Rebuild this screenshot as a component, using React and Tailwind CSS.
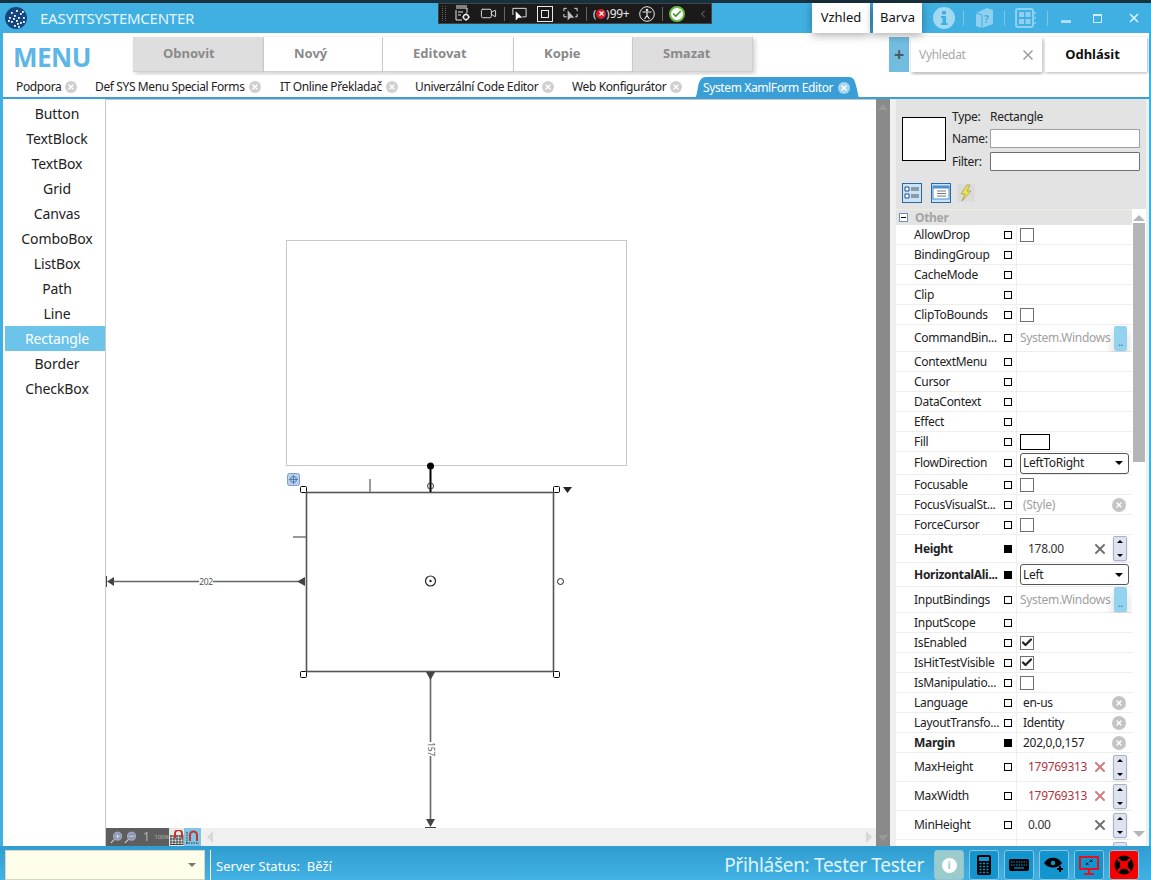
import React from 'react';
import { Video, Check, X, ChevronLeft } from 'lucide-react';

const tools = ['Button', 'TextBlock', 'TextBox', 'Grid', 'Canvas', 'ComboBox', 'ListBox', 'Path', 'Line', 'Rectangle', 'Border', 'CheckBox'];

const actions = [
  { label: 'Obnovit', width: 'w-[131px]', gray: true },
  { label: 'Nový', width: 'w-[119px]' },
  { label: 'Editovat', width: 'w-[131px]' },
  { label: 'Kopie', width: 'w-[119px]' },
  { label: 'Smazat', width: 'w-[120px]', gray: true },
];

const tabs = [
  { label: 'Podpora', width: 'w-[89px]' },
  { label: 'Def SYS Menu Special Forms', width: 'w-[185px]' },
  { label: 'IT Online Překladač', width: 'w-[135px]' },
  { label: 'Univerzální Code Editor', width: 'w-[157px]' },
  { label: 'Web Konfigurátor', width: 'w-[122px]' },
];

// h = row height, kind = editor in the value column
const rows = [
  { name: 'AllowDrop', h: 'h-[20px]', kind: 'check' },
  { name: 'BindingGroup', h: 'h-[20px]' },
  { name: 'CacheMode', h: 'h-[20px]' },
  { name: 'Clip', h: 'h-[20px]' },
  { name: 'ClipToBounds', h: 'h-[20px]', kind: 'check' },
  { name: 'CommandBin...', h: 'h-[27px]', kind: 'dots' },
  { name: 'ContextMenu', h: 'h-[20px]' },
  { name: 'Cursor', h: 'h-[20px]' },
  { name: 'DataContext', h: 'h-[20px]' },
  { name: 'Effect', h: 'h-[20px]' },
  { name: 'Fill', h: 'h-[20px]', kind: 'fill' },
  { name: 'FlowDirection', h: 'h-[23px]', kind: 'select', value: 'LeftToRight' },
  { name: 'Focusable', h: 'h-[20px]', kind: 'check' },
  { name: 'FocusVisualSt...', h: 'h-[20px]', kind: 'clear', value: '(Style)', muted: true },
  { name: 'ForceCursor', h: 'h-[20px]', kind: 'check' },
  { name: 'Height', h: 'h-[28px]', kind: 'spin', value: '178.00', bold: true },
  { name: 'HorizontalAli...', h: 'h-[24px]', kind: 'select', value: 'Left', bold: true },
  { name: 'InputBindings', h: 'h-[26px]', kind: 'dots' },
  { name: 'InputScope', h: 'h-[20px]' },
  { name: 'IsEnabled', h: 'h-[20px]', kind: 'check', checked: true },
  { name: 'IsHitTestVisible', h: 'h-[20px]', kind: 'check', checked: true },
  { name: 'IsManipulatio...', h: 'h-[20px]', kind: 'check' },
  { name: 'Language', h: 'h-[20px]', kind: 'clear', value: 'en-us' },
  { name: 'LayoutTransfo...', h: 'h-[20px]', kind: 'clear', value: 'Identity' },
  { name: 'Margin', h: 'h-[20px]', kind: 'clear', value: '202,0,0,157', bold: true },
  { name: 'MaxHeight', h: 'h-[29px]', kind: 'spin', value: '179769313', red: true },
  { name: 'MaxWidth', h: 'h-[29px]', kind: 'spin', value: '179769313', red: true },
  { name: 'MinHeight', h: 'h-[29px]', kind: 'spin', value: '0.00' },
  { name: '', h: 'h-[29px]', kind: 'spin', value: '' },
];

const ClearDot = ({ className = 'bg-[#c4c4c4]', size = 'w-[14px] h-[14px]' }) => (
  <span className={`${size} ${className} rounded-full flex items-center justify-center shrink-0`}>
    <X className="w-[8px] h-[8px] text-white" strokeWidth={4} />
  </span>
);

const CheckBox = ({ checked }) => (
  <span className="ml-[3px] w-[14px] h-[14px] border border-[#707070] bg-white flex items-center justify-center">
    {checked && <Check className="w-[13px] h-[13px] text-[#222]" strokeWidth={4.5} />}
  </span>
);

const Spinner = () => (
  <span className="w-[14px] h-[25px] rounded-[2px] border border-[#a9b2cc] bg-[#dfe3ef] flex flex-col items-center justify-between py-[3px] shadow-sm">
    <span className="w-0 h-0 border-x-[3px] border-x-transparent border-b-[3px] border-b-black" />
    <span className="w-0 h-0 border-x-[3px] border-x-transparent border-t-[3px] border-t-black" />
  </span>
);

const ValueEditor = ({ row }) => {
  switch (row.kind) {
    case 'check':
      return <CheckBox checked={row.checked} />;
    case 'fill':
      return <span className="ml-[3px] w-[30px] h-[16px] border border-black bg-white" />;
    case 'dots':
      return (
        <div className="flex items-center w-full pl-[3px] pr-[5px] justify-between">
          <span className="text-[12px] text-[#a0a0a0] whitespace-nowrap">System.Windows</span>
          <span className="w-[13px] h-[25px] rounded-[2px] bg-[#93d3ef] shadow-[0_6px_12px_rgba(0,0,0,0.18)] flex items-end justify-center text-[9px] leading-[16px] font-bold text-[#5b7e90]">..</span>
        </div>
      );
    case 'select':
      return (
        <div className="ml-[3px] w-[109px] h-[21px] rounded-[3px] border border-[#555] bg-white flex items-center justify-between pl-[2px] pr-[5px]">
          <span className="text-[12px] text-[#222]">{row.value}</span>
          <span className="w-0 h-0 border-x-[4px] border-x-transparent border-t-[4px] border-t-black" />
        </div>
      );
    case 'clear':
      return (
        <div className="flex items-center justify-between w-full pl-[6px] pr-[6px]">
          <span className={`text-[12px] ${row.muted ? 'text-[#a0a0a0]' : 'text-[#222]'}`}>{row.value}</span>
          <ClearDot />
        </div>
      );
    case 'spin':
      return (
        <div className="flex items-center w-full pl-[11px] pr-[5px] justify-between">
          <span className={`text-[12px] whitespace-nowrap ${row.red ? 'text-[#b0343a]' : 'text-[#333]'}`}>{row.value}</span>
          <span className="flex items-center gap-[5px]">
            {row.value && <X className={`w-[16px] h-[16px] ${row.red ? 'text-[#cf7d7d]' : 'text-[#707070]'}`} strokeWidth={3} />}
            <Spinner />
          </span>
        </div>
      );
    default:
      return null;
  }
};

const PropertyRow = ({ row }) => (
  <div className={`${row.h} shrink-0 flex border-b border-[#eeeeee] bg-white`}>
    <div className={`w-[100px] pl-[18px] flex items-center text-[12px] text-[#222] whitespace-nowrap ${row.bold ? 'font-bold' : ''}`}>
      {row.name}
    </div>
    <div className="w-[20px] flex items-center pl-[8px]">
      <span className={`w-[8px] h-[8px] border border-black ${row.bold ? 'bg-black' : 'bg-white'}`} />
    </div>
    <div className="flex-1 border-l border-[#eeeeee] flex items-center min-w-0">
      <ValueEditor row={row} />
    </div>
  </div>
);

const Logo = () => (
  <svg width="22" height="22" viewBox="0 0 22 22" className="shrink-0">
    <circle cx="11" cy="11" r="11" fill="#16467f" />
    {[[6, 5], [11, 3], [15, 6], [4, 10], [9, 8], [13, 10], [18, 10], [6, 14], [11, 13], [15, 15], [9, 18], [13, 19], [18, 14], [3, 13], [8, 11], [17, 4], [12, 16]].map(([x, y], i) => (
      <rect key={i} x={x} y={y} width="1.8" height="1.8" fill="#fff" />
    ))}
  </svg>
);

const Separator = ({ className }) => <span className={`w-px h-[15px] bg-[#7cc6e8] ${className}`} />;

const TitleBar = () => (
  <div className="h-[30px] shrink-0 flex items-center pl-[5px] bg-[#40b0e2] relative">
    <Logo />
    <span className="ml-[13px] text-[15px] tracking-[-0.25px] text-[#e4f5fc]">EASYITSYSTEMCENTER</span>
    <div className="ml-auto flex items-center h-full pr-[11px]">
      <div className="flex gap-[3px] h-full relative z-20 tracking-normal">
        <span className="w-[58px] h-full bg-white shadow-[0_2px_10px_rgba(0,0,0,0.35)] text-[13px] text-[#111] flex items-center justify-center">Vzhled</span>
        <span className="w-[49px] h-full bg-white shadow-[0_2px_10px_rgba(0,0,0,0.35)] text-[13px] text-[#111] flex items-center justify-center">Barva</span>
      </div>
      <svg width="22" height="22" viewBox="0 0 22 22" className="ml-[11px]">
        <circle cx="11" cy="11" r="11" fill="#a2d9f2" />
        <rect x="9" y="4" width="4" height="3.5" fill="#40b0e2" />
        <path d="M8 9 H13 V16 H14.5 V18 H8 V16 H9.5 V11 H8 Z" fill="#40b0e2" />
      </svg>
      <Separator className="ml-[8px]" />
      <svg width="19" height="22" viewBox="0 0 19 22" className="ml-[11px]">
        <path d="M1 6 L12 1 L18 3 V17 L7 21 L1 19 Z" fill="#8fd0ee" />
        <path d="M1 6 L7 8 V21" fill="none" stroke="#40b0e2" />
        <text x="9" y="16" fontSize="10" fontWeight="700" fill="#40b0e2">?</text>
      </svg>
      <Separator className="ml-[10px]" />
      <svg width="21" height="20" viewBox="0 0 21 20" className="ml-[10px]">
        <rect x="1" y="1" width="17" height="18" rx="2" fill="none" stroke="#8fd0ee" strokeWidth="2" />
        <rect x="4" y="4" width="5" height="5" fill="#8fd0ee" />
        <rect x="10.5" y="4" width="5" height="5" fill="#8fd0ee" />
        <rect x="4" y="11" width="5" height="5" fill="#8fd0ee" />
        <rect x="10.5" y="11" width="5" height="5" fill="#8fd0ee" />
        <path d="M19 5 H21 M19 10 H21 M19 15 H21" stroke="#8fd0ee" strokeWidth="1.5" />
      </svg>
      <Separator className="ml-[11px]" />
      <span className="w-[10px] h-[3px] bg-[#a9def5] mt-[7px] ml-[13px]" />
      <span className="w-[9px] h-[9px] border border-t-2 border-[#cdeefb] ml-[22px]" />
      <X className="w-[14px] h-[14px] text-[#d5f1fc] ml-[25px] -mr-[1px]" strokeWidth={3} />
    </div>
  </div>
);

const MenuRow = () => (
  <div className="h-[42px] shrink-0 flex bg-white pt-[4px]">
    <span className="w-[130px] pl-[10px] text-[26px] tracking-[-0.5px] font-bold text-[#5cb6e8] leading-[40px]">MENU</span>
    <div className="flex h-[35px] tracking-normal">
      {actions.map((a) => (
        <span key={a.label} className={`${a.width} pl-[30px] flex items-center text-[13px] font-bold text-[#8a8a8a] border-r border-b border-[#cfcfcf] shadow-[2px_2px_5px_rgba(0,0,0,0.2)] ${a.gray ? 'bg-[#dedede]' : 'bg-white'}`}>
          {a.label}
        </span>
      ))}
    </div>
    <div className="ml-auto flex h-[35px]">
      <span className="w-[20px] bg-[#71bcdf] text-[#4d5a63] text-[18px] font-bold flex items-center justify-center">+</span>
      <div className="ml-[2px] w-[131px] bg-white shadow-[1px_2px_4px_rgba(0,0,0,0.3)] flex items-center justify-between pl-[8px] pr-[6px]">
        <span className="text-[12px] text-[#a8a8a8]">Vyhledat</span>
        <X className="w-[16px] h-[16px] text-[#a0a0a0]" strokeWidth={2.5} />
      </div>
      <span className="ml-[3px] mr-[2px] w-[102px] pr-[7px] tracking-normal bg-white shadow-[1px_1px_3px_rgba(0,0,0,0.3)] flex items-center justify-center text-[13px] font-bold text-[#111]">Odhlásit</span>
    </div>
  </div>
);

const TabRow = () => (
  <div className="h-[24px] shrink-0 flex bg-white pt-[2px] border-b-2 border-[#3a9fd6] text-[12px] text-[#222] tracking-[-0.38px]">
    <div className="flex">
      {tabs.map((t, i) => (
        <span key={t.label} className={`${t.width} ${i === 0 ? 'pl-[13px]' : 'pl-[3px]'} flex items-center whitespace-nowrap`}>
          {t.label}
          <span className="ml-[4px]"><ClearDot size="w-[12px] h-[12px]" className="bg-[#cfcfcf]" /></span>
        </span>
      ))}
    </div>
    <span className="ml-[3px] w-[166px] h-[22px] pl-[9px] flex items-center text-white whitespace-nowrap bg-[#3a9fd6] [clip-path:path('M0_22_C2_22_3_16_4_10_C5_3_8_0_12_0_L155_0_C160_0_161_4_163_12_C164_18_165_22_166_22_Z')]">
      System XamlForm Editor
      <span className="ml-[5px]"><ClearDot size="w-[12px] h-[12px]" className="bg-[#a9d6ec]" /></span>
    </span>
  </div>
);

const Toolbox = () => (
  <div className="w-[103px] shrink-0 bg-white border-r border-[#c8c8c8] pl-[2px] pt-[2px] tracking-[-0.1px]">
    {tools.map((t) => (
      <div key={t} className={`h-[25px] pl-[4px] flex items-center justify-center text-[14px] ${t === 'Rectangle' ? 'bg-[#6cc4ea] text-white' : 'text-[#222]'}`}>
        {t}
      </div>
    ))}
  </div>
);

// designer adorners, drawn in canvas coordinates
const Adorners = () => (
  <svg className="absolute inset-0" width="770" height="728" viewBox="0 2 770 728">
    <rect x="180.5" y="142.5" width="340" height="225" fill="#fff" stroke="#c8c8c8" />
    <rect x="200.5" y="394.5" width="247" height="179" fill="#fff" stroke="#555" strokeWidth="1.6" />
    <line x1="324.5" y1="369" x2="324.5" y2="394" stroke="#000" strokeWidth="2" />
    <circle cx="324.5" cy="368" r="3.5" fill="#000" />
    <circle cx="324.5" cy="388" r="3" fill="none" stroke="#333" />
    <line x1="264" y1="381" x2="264" y2="394" stroke="#777" strokeWidth="1.5" />
    <line x1="187" y1="439" x2="200" y2="439" stroke="#777" strokeWidth="1.5" />
    {[[194.5, 388.5], [447.5, 388.5], [194.5, 573.5], [447.5, 573.5]].map(([x, y]) => (
      <rect key={`${x}-${y}`} x={x} y={y} width="6" height="6" rx="1" fill="#fff" stroke="#000" />
    ))}
    <circle cx="324.5" cy="483" r="5" fill="#fff" stroke="#222" strokeWidth="1.2" />
    <circle cx="324.5" cy="483" r="1.2" fill="#222" />
    <circle cx="454.5" cy="483.5" r="3" fill="#fff" stroke="#222" />
    <path d="M457 389 H466 L461.5 395 Z" fill="#222" />
    <rect x="181.5" y="375.5" width="12" height="12" rx="2" fill="#b7d0ec" stroke="#7d9fc9" />
    <path d="M187.5 377 V386 M183 381.5 H192" stroke="#5579a8" strokeWidth="1" />
    <circle cx="187.5" cy="381.5" r="3" fill="none" stroke="#5579a8" />
    <line x1="8" y1="483.5" x2="192" y2="483.5" stroke="#666" strokeWidth="1.6" />
    <path d="M1 483.5 L8 479 V488 Z M191 483.5 L199 479 V488 Z" fill="#444" />
    <path d="M0.5 478 V489" stroke="#444" />
    <rect x="93" y="478" width="14" height="11" fill="#fff" />
    <text x="100" y="487" fontSize="8.5" textAnchor="middle" fill="#555" fontFamily="Noto Sans">202</text>
    <line x1="324.5" y1="580" x2="324.5" y2="722" stroke="#666" strokeWidth="1.6" />
    <path d="M320 574 H329 L324.5 582 Z M320 721 H329 L324.5 729 Z" fill="#444" />
    <path d="M319 729.5 H330" stroke="#444" />
    <rect x="319" y="644" width="11" height="14" fill="#fff" />
    <text x="0" y="0" fontSize="8.5" textAnchor="middle" fill="#555" fontFamily="Noto Sans" transform="translate(322 651) rotate(90)">157</text>
  </svg>
);

const DesignerFooter = () => (
  <div className="h-[18px] shrink-0 flex items-center bg-[#f0f0f0]">
    <div className="w-[63px] h-full bg-[#5e5e5e] flex items-center text-[#b5b5b5] pl-[4px]">
      <svg width="13" height="13" viewBox="0 0 14 14"><circle cx="8.5" cy="5.5" r="4.5" fill="#8e97b4" stroke="#b0b9d5" /><path d="M6 5.5 H11 M8.5 3 V8 M5 9 L1 13" stroke="#d7d7d7" strokeWidth="1.2" /></svg>
      <svg width="13" height="13" viewBox="0 0 14 14" className="ml-[2px]"><circle cx="8.5" cy="5.5" r="4.5" fill="#8e97b4" stroke="#b0b9d5" /><path d="M6 5.5 H11 M5 9 L1 13" stroke="#d7d7d7" strokeWidth="1.2" /></svg>
      <span className="ml-[6px] text-[12px]">1</span>
      <span className="ml-[5px] text-[6px] tracking-[-0.2px]">100%</span>
    </div>
    <span className="w-[15px] h-full bg-[#e8e8e8] flex items-center justify-center">
      <svg width="15" height="15" viewBox="0 0 15 15"><path d="M1 6 H14 M1 9 H14 M1 12 H14 M1 14.5 H14 M2 5 V15 M5 5 V15 M8 5 V15 M11 5 V15 M14 5 V15" stroke="#111" strokeWidth="0.7" /><path d="M6 8 V3.5 A3.5 3.5 0 0 1 13 3.5 V8" fill="none" stroke="#c9332c" strokeWidth="2" /></svg>
    </span>
    <span className="w-[17px] h-full bg-[#7ec6e4] flex items-center justify-center">
      <svg width="15" height="15" viewBox="0 0 15 15"><path d="M1 13 H14 M2 2 V14" stroke="#111" strokeWidth="0.8" strokeDasharray="1.5 1" /><path d="M5 11 V5 A3.5 3.5 0 0 1 12 5 V11" fill="none" stroke="#c9332c" strokeWidth="2" /></svg>
    </span>
    <span className="ml-[6px] w-0 h-0 border-y-[6px] border-y-transparent border-r-[6px] border-r-[#d8d8d8]" />
    <span className="ml-auto mr-[4px] w-0 h-0 border-y-[6px] border-y-transparent border-l-[6px] border-l-[#d8d8d8]" />
  </div>
);

const Designer = () => (
  <div className="flex-1 min-w-0 flex bg-white">
    <div className="flex-1 min-w-0 flex flex-col">
      <div className="flex-1 relative bg-white border-t border-[#c8c8c8] overflow-hidden">
        <Adorners />
      </div>
      <DesignerFooter />
    </div>
    <div className="w-[14px] shrink-0 bg-[#8a8a8a] flex flex-col justify-between items-center py-[5px]">
      <span className="w-0 h-0 border-x-[5px] border-x-transparent border-b-[6px] border-b-[#999]" />
      <span className="w-0 h-0 border-x-[5px] border-x-transparent border-t-[6px] border-t-[#999]" />
    </div>
  </div>
);

const PropertyPanel = () => (
  <div className="w-[259px] shrink-0 bg-[#f0f0f0] pl-[6px] pr-[3px] flex flex-col overflow-hidden">
    <div className="h-[110px] shrink-0 bg-[#e3e3e3] relative pl-[6px] pt-[18px]">
      <div className="w-[44px] h-[44px] bg-white border border-black" />
      <div className="absolute left-[56px] top-[9px] w-[190px] flex flex-col text-[12px] text-[#222]">
        <div className="h-[18px] flex items-center"><span className="w-[38px]">Type:</span>Rectangle</div>
        <div className="h-[25px] flex items-center"><span className="w-[38px]">Name:</span><span className="w-[150px] h-[19px] bg-white border border-[#a0a0a0]" /></div>
        <div className="h-[21px] flex items-center"><span className="w-[38px]">Filter:</span><span className="w-[150px] h-[19px] bg-white border border-[#707070] rounded-[1px]" /></div>
      </div>
      <div className="flex items-center gap-[9px] mt-[22px]">
        <svg width="20" height="20" viewBox="0 0 20 20"><rect x="0.5" y="0.5" width="19" height="19" fill="#c9e3f7" stroke="#2b6aa0" /><path d="M3 4 H7 V8 H3 Z M3 11 H7 V15 H3 Z" fill="#fff" stroke="#1e4f85" /><path d="M9 5 H17 M9 7 H17 M9 12 H17 M9 14 H17" stroke="#555" /></svg>
        <svg width="20" height="20" viewBox="0 0 20 20"><rect x="0.5" y="0.5" width="19" height="19" fill="#c9e3f7" stroke="#2b6aa0" /><rect x="2" y="3" width="16" height="13" fill="#fff" stroke="#4a90d0" /><rect x="2" y="3" width="16" height="2.5" fill="#4a90d0" /><path d="M6 8 H15 M6 10.5 H15 M6 13 H15" stroke="#777" /></svg>
        <svg width="18" height="18" viewBox="0 0 18 18" className="-ml-[3px] bg-[#dbdbdb]"><path d="M10 1 L4 10 H8 L5 17 L14 7 H10 L13 1 Z" fill="#eadf5e" stroke="#a59a2f" strokeWidth="0.7" /></svg>
      </div>
    </div>
    <div className="flex-1 min-h-0 flex bg-white">
      <div className="flex-1 min-w-0 flex flex-col overflow-hidden">
        <div className="h-[16px] shrink-0 bg-[#e3e3e3] border-t border-[#efefe0] flex items-center pl-[3px]">
          <span className="w-[9px] h-[9px] border border-[#6f8fb0] bg-white flex items-center justify-center"><span className="w-[5px] h-px bg-black" /></span>
          <span className="ml-[7px] text-[12px] font-bold text-[#a5a5a5]">Other</span>
        </div>
        {rows.map((row, i) => <PropertyRow key={i} row={row} />)}
      </div>
      <div className="w-[14px] shrink-0 bg-white flex flex-col items-center relative">
        <span className="mt-[6px] w-0 h-0 border-x-[6px] border-x-transparent border-b-[6px] border-b-[#b5b5b5]" />
        <span className="mt-[2px] w-[12px] h-[239px] bg-[#b5b5b5]" />
        <span className="absolute top-[622px] w-0 h-0 border-x-[6px] border-x-transparent border-t-[6px] border-t-[#b5b5b5]" />
      </div>
    </div>
  </div>
);

const StatusButton = ({ className = 'bg-[#1294cf]', children }) => (
  <span className={`w-[30px] h-[30px] rounded-[3px] border border-[#8cc4dc] flex items-center justify-center ${className}`}>
    {children}
  </span>
);

const Footer = () => (
  <div className="h-[34px] shrink-0 flex items-end bg-gradient-to-b from-[#2f9dd0] to-[#42b1e4] relative">
    <div className="ml-[5px] w-[200px] h-[30px] bg-[#fffeeb] border border-[#d6d6c8] flex items-center justify-end pr-[8px]">
      <span className="w-0 h-0 border-x-[4px] border-x-transparent border-t-[4px] border-t-[#777]" />
    </div>
    <span className="ml-[5px] w-px h-[30px] bg-white" />
    <span className="h-full flex items-center pl-[5px] pt-[8px] text-[13px] tracking-normal text-white whitespace-pre">Server Status:  Běží</span>
    <div className="ml-auto flex items-center h-[30px] gap-[5px] pr-[12px]">
      <span className="mr-[5px] text-[19px] leading-[30px] text-[#dff5fd] whitespace-nowrap">Přihlášen: Tester Tester</span>
      <StatusButton className="bg-[#9ccbcc]"><span className="w-[15px] h-[15px] rounded-full bg-white flex items-center justify-center text-[11px] font-bold text-[#9ccbcc]">i</span></StatusButton>
      <StatusButton>
        <svg width="14" height="20" viewBox="0 0 14 20"><rect width="14" height="20" rx="2" fill="#000" /><rect x="2" y="2" width="10" height="4" fill="#1294cf" /><path d="M2.5 8.5 H4.5 M6 8.5 H8 M9.5 8.5 H11.5 M2.5 11.5 H4.5 M6 11.5 H8 M9.5 11.5 H11.5 M2.5 14.5 H4.5 M6 14.5 H8 M9.5 14.5 H11.5 M2.5 17.5 H4.5 M6 17.5 H8 M9.5 17.5 H11.5" stroke="#1294cf" strokeWidth="1.6" /></svg>
      </StatusButton>
      <StatusButton>
        <svg width="20" height="12" viewBox="0 0 20 12"><rect width="20" height="12" rx="2" fill="#000" /><path d="M2 3 H18 M2 6 H18" stroke="#1294cf" strokeWidth="1" strokeDasharray="1.5 1" /><path d="M5 9 H15" stroke="#1294cf" strokeWidth="1.2" /></svg>
      </StatusButton>
      <StatusButton>
        <svg width="20" height="16" viewBox="0 0 20 16"><path d="M0 6 C4 -1 14 -1 18 6 C14 12 4 12 0 6 Z" fill="#000" /><circle cx="9" cy="6" r="2.2" fill="#1294cf" /><path d="M16 9 V15 M13 12 H19" stroke="#000" strokeWidth="2" /></svg>
      </StatusButton>
      <StatusButton>
        <svg width="20" height="19" viewBox="0 0 20 19"><rect x="1" y="1" width="18" height="12" fill="none" stroke="#e3131d" strokeWidth="2" /><path d="M10 13 V17 M5 18 H15" stroke="#e3131d" strokeWidth="2" /><path d="M7 9 L9.5 6.5 M7 6.5 L9.5 9 M11 6 L13.5 3.5 M11 3.5 L13.5 6" stroke="#111" strokeWidth="1" /></svg>
      </StatusButton>
      <StatusButton className="bg-[#f70000]">
        <svg width="20" height="20" viewBox="0 0 20 20"><circle cx="10" cy="10" r="9.5" fill="#000" /><circle cx="10" cy="10" r="4" fill="#f70000" /><path d="M3.5 3.5 L8 8 M16.5 3.5 L12 8 M3.5 16.5 L8 12 M16.5 16.5 L12 12" stroke="#f70000" strokeWidth="2.4" /></svg>
      </StatusButton>
    </div>
  </div>
);

const FloatingBar = () => (
  <div className="absolute left-[438px] top-[3px] w-[274px] h-[21px] bg-[#1a1a1a] border border-[#444] flex items-center text-[#e8e8e8] z-30">
    <span className="ml-[3px] w-[4px] h-[15px] border-x border-dotted border-[#666]" />
    <svg width="17" height="17" viewBox="0 0 17 17" className="ml-[8px]"><path d="M2 5 V15 H8 M2 1 H13 M2 3 H13 V8 M4 7 H9 M4 10 H7" fill="none" stroke="#e8e8e8" /><circle cx="12" cy="12" r="2.5" fill="none" stroke="#e8e8e8" strokeWidth="1.3" /><path d="M12 8 V9.5 M12 14.5 V16 M8 12 H9.5 M14.5 12 H16" stroke="#e8e8e8" /></svg>
    <Video className="ml-[9px] w-[17px] h-[17px]" strokeWidth={1.3} />
    <span className="ml-[7px] w-px h-[14px] bg-[#666]" />
    <svg width="17" height="16" viewBox="0 0 18 16" className="ml-[6px]"><path d="M2 9 V2 H16 V11 H12" fill="none" stroke="#e8e8e8" /><path d="M5 5 L5 15 L8 12 L12 12 Z" fill="#fff" /></svg>
    <span className="ml-[9px] w-[16px] h-[16px] border border-[#e8e8e8] flex items-center justify-center"><span className="w-[8px] h-[8px] border border-[#e8e8e8]" /></span>
    <svg width="17" height="16" viewBox="0 0 18 16" className="ml-[9px]"><path d="M5 2 H2 V5 M13 2 H16 V5 M2 8 V11 H5 M16 8 V11 H14" fill="none" stroke="#e8e8e8" /><path d="M6 4 L6 15 L9 12 L13 12 Z" fill="#bbb" /></svg>
    <span className="ml-[7px] w-px h-[14px] bg-[#666]" />
    <span className="ml-[6px] text-[#e8e8e8] text-[11px] leading-none tracking-normal">(</span>
    <span className="w-[10px] h-[10px] rounded-full bg-[#d81e2c] flex items-center justify-center"><X className="w-[7px] h-[7px] text-white" strokeWidth={4} /></span>
    <span className="text-[#e8e8e8] text-[11px] leading-none tracking-normal">)</span>
    <span className="text-[12px] text-[#e8e8e8]">99+</span>
    <svg width="16" height="16" viewBox="0 0 16 16" className="ml-[10px]"><circle cx="8" cy="8" r="7.3" fill="none" stroke="#e8e8e8" /><circle cx="8" cy="4" r="1.3" fill="#e8e8e8" /><path d="M3.5 6 H12.5 M8 6 V9.5 M8 9.5 L5.5 13 M8 9.5 L10.5 13" fill="none" stroke="#e8e8e8" strokeWidth="1.2" /></svg>
    <span className="ml-[7px] w-px h-[14px] bg-[#666]" />
    <span className="ml-[6px] w-[16px] h-[16px] rounded-full bg-white border-2 border-[#6dbb45] flex items-center justify-center"><Check className="w-[10px] h-[10px] text-[#3c9a2a]" strokeWidth={4} /></span>
    <ChevronLeft className="ml-[12px] w-[12px] h-[12px] text-[#777]" />
  </div>
);

export default function App() {
  return (
    <div className="relative w-[1151px] h-[880px] overflow-hidden flex flex-col bg-[#40b0e2] tracking-[-0.3px] font-['Noto_Sans','Open_Sans',sans-serif]">
      <div className="h-[3px] shrink-0 bg-[#17323f]" />
      <FloatingBar />
      <TitleBar />
      <div className="flex-1 min-h-0 flex flex-col ml-[3px] mr-[2px]">
        <MenuRow />
        <TabRow />
        <div className="flex-1 min-h-0 flex bg-white">
          <Toolbox />
          <Designer />
          <PropertyPanel />
        </div>
      </div>
      <Footer />
    </div>
  );
}
